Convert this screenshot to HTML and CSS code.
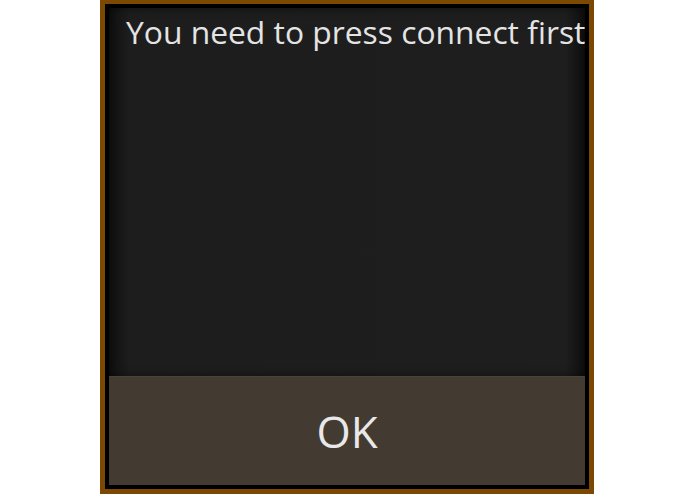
FILE: index.html
```html
<!DOCTYPE html>
<html>
<head>
<meta charset="utf-8">
<link rel="stylesheet" href="styles.css">
</head>
<body>
<div class="frame">
  <div class="inner">
    <div class="panel">
      <p class="message">You need to press connect first</p>
    </div>
    <div class="button">OK</div>
  </div>
</div>
</body>
</html>
```
FILE: styles.css
```css
html, body {
  margin: 0;
  padding: 0;
  background: #ffffff;
}
body {
  width: 695px;
  height: 494px;
  overflow: hidden;
  font-family: "Open Sans", "DejaVu Sans", sans-serif;
}
.frame {
  margin-left: 100px;
  width: 494px;
  height: 494px;
  box-sizing: border-box;
  border: 5px solid #7b4902;
  border-top-width: 4px;
  background: #000;
}
.inner {
  height: 100%;
  box-sizing: border-box;
  border: 4px solid #000;
  display: flex;
  flex-direction: column;
}
.panel {
  height: 368px;
  background: linear-gradient(to right, #0f0f0f 0, #1d1d1d 20px, #1e1e1e calc(100% - 20px), #0f0f0f 100%);
  box-shadow: inset 0 0 10px rgba(0, 0, 0, 0.5);
  overflow: hidden;
}
.message {
  margin: 0;
  padding: 2px 0 0 17px;
  font-size: 31.8px;
  color: #e4e4e4;
  white-space: nowrap;
}
.button {
  flex: 1;
  background: #433a31;
  border-top: 1px solid #4c4238;
  color: #e8e8e8;
  font-size: 44px;
  display: flex;
  align-items: center;
  justify-content: center;
}
```
